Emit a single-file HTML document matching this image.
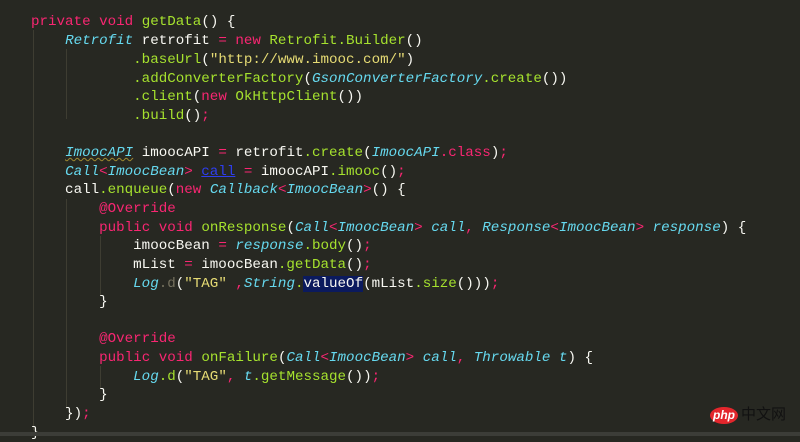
<!DOCTYPE html>
<html><head><meta charset="utf-8"><style>
html,body{margin:0;padding:0;}
body{width:800px;height:436px;background:#272822;overflow:hidden;position:relative;font-family:"Liberation Mono",monospace;font-size:14.2px;color:#f8f8f2;}
.l{position:absolute;left:31px;white-space:pre;line-height:18px;height:18px;}
.k{color:#f92672}.f{color:#a6e22e}.t{color:#66d9ef;font-style:italic}.s{color:#e6db74}.g{color:#75715e}
.u{color:#2e3ef0;text-decoration:underline}
.h{background:#0b1a5e}
.w{text-decoration:underline wavy #a08a30;text-decoration-thickness:1px}
.guide{position:absolute;width:1px;background:#3e3d32;}
.bar{position:absolute;left:0;bottom:0;width:800px;height:4px;background:#3c3d38;}
</style></head><body>
<div class="guide" style="left:33px;top:30px;height:400px"></div>
<div class="guide" style="left:66px;top:49px;height:70px"></div>
<div class="guide" style="left:66px;top:199px;height:210px"></div>
<div class="guide" style="left:100px;top:236px;height:60px"></div>
<div class="guide" style="left:100px;top:366px;height:22px"></div>
<div class="l" style="top:13px"><span class="k">private</span> <span class="k">void</span> <span class="f">getData</span>() {</div>
<div class="l" style="top:32px">    <span class="t">Retrofit</span> retrofit <span class="k">=</span> <span class="k">new</span> <span class="f">Retrofit.Builder</span>()</div>
<div class="l" style="top:51px">            <span class="f">.baseUrl</span>(<span class="s">"http://www.imooc.com/"</span>)</div>
<div class="l" style="top:70px">            <span class="f">.addConverterFactory</span>(<span class="t">GsonConverterFactory</span><span class="f">.create</span>())</div>
<div class="l" style="top:88px">            <span class="f">.client</span>(<span class="k">new</span> <span class="f">OkHttpClient</span>())</div>
<div class="l" style="top:107px">            <span class="f">.build</span>()<span class="k">;</span></div>
<div class="l" style="top:144px">    <span class="t w">ImoocAPI</span> imoocAPI <span class="k">=</span> retrofit<span class="f">.create</span>(<span class="t">ImoocAPI</span><span class="k">.class</span>)<span class="k">;</span></div>
<div class="l" style="top:163px">    <span class="t">Call</span><span class="k">&lt;</span><span class="t">ImoocBean</span><span class="k">&gt;</span> <span class="u">call</span> <span class="k">=</span> imoocAPI<span class="f">.imooc</span>()<span class="k">;</span></div>
<div class="l" style="top:181px">    call<span class="f">.enqueue</span>(<span class="k">new</span> <span class="t">Callback</span><span class="k">&lt;</span><span class="t">ImoocBean</span><span class="k">&gt;</span>() {</div>
<div class="l" style="top:200px">        <span class="k">@Override</span></div>
<div class="l" style="top:219px">        <span class="k">public</span> <span class="k">void</span> <span class="f">onResponse</span>(<span class="t">Call</span><span class="k">&lt;</span><span class="t">ImoocBean</span><span class="k">&gt;</span> <span class="t">call</span><span class="k">,</span> <span class="t">Response</span><span class="k">&lt;</span><span class="t">ImoocBean</span><span class="k">&gt;</span> <span class="t">response</span>) {</div>
<div class="l" style="top:237px">            imoocBean <span class="k">=</span> <span class="t">response</span><span class="f">.body</span>()<span class="k">;</span></div>
<div class="l" style="top:256px">            mList <span class="k">=</span> imoocBean<span class="f">.getData</span>()<span class="k">;</span></div>
<div class="l" style="top:275px">            <span class="t">Log</span><span class="g">.d</span>(<span class="s">"TAG"</span> <span class="k">,</span><span class="t">String</span><span class="f">.</span><span class="h">valueOf</span>(mList<span class="f">.size</span>()))<span class="k">;</span></div>
<div class="l" style="top:293px">        }</div>
<div class="l" style="top:330px">        <span class="k">@Override</span></div>
<div class="l" style="top:349px">        <span class="k">public</span> <span class="k">void</span> <span class="f">onFailure</span>(<span class="t">Call</span><span class="k">&lt;</span><span class="t">ImoocBean</span><span class="k">&gt;</span> <span class="t">call</span><span class="k">,</span> <span class="t">Throwable</span> <span class="t">t</span>) {</div>
<div class="l" style="top:368px">            <span class="t">Log</span><span class="f">.d</span>(<span class="s">"TAG"</span><span class="k">,</span> <span class="t">t</span><span class="f">.getMessage</span>())<span class="k">;</span></div>
<div class="l" style="top:386px">        }</div>
<div class="l" style="top:405px">    })<span class="k">;</span></div>
<div class="l" style="top:424px">}</div>
<div style="position:absolute;left:710px;top:407px;width:28px;height:17px;border-radius:50%;background:#e3262c;color:#fff;font-family:'Liberation Sans',sans-serif;font-style:italic;font-weight:bold;font-size:12px;line-height:17px;text-align:center;">php</div>
<div style="position:absolute;left:741px;top:405px;color:#111;font-family:'Liberation Sans','Noto Sans CJK SC',sans-serif;font-size:15px;line-height:20px;">中文网</div>
<div class="bar"></div>
</body></html>
